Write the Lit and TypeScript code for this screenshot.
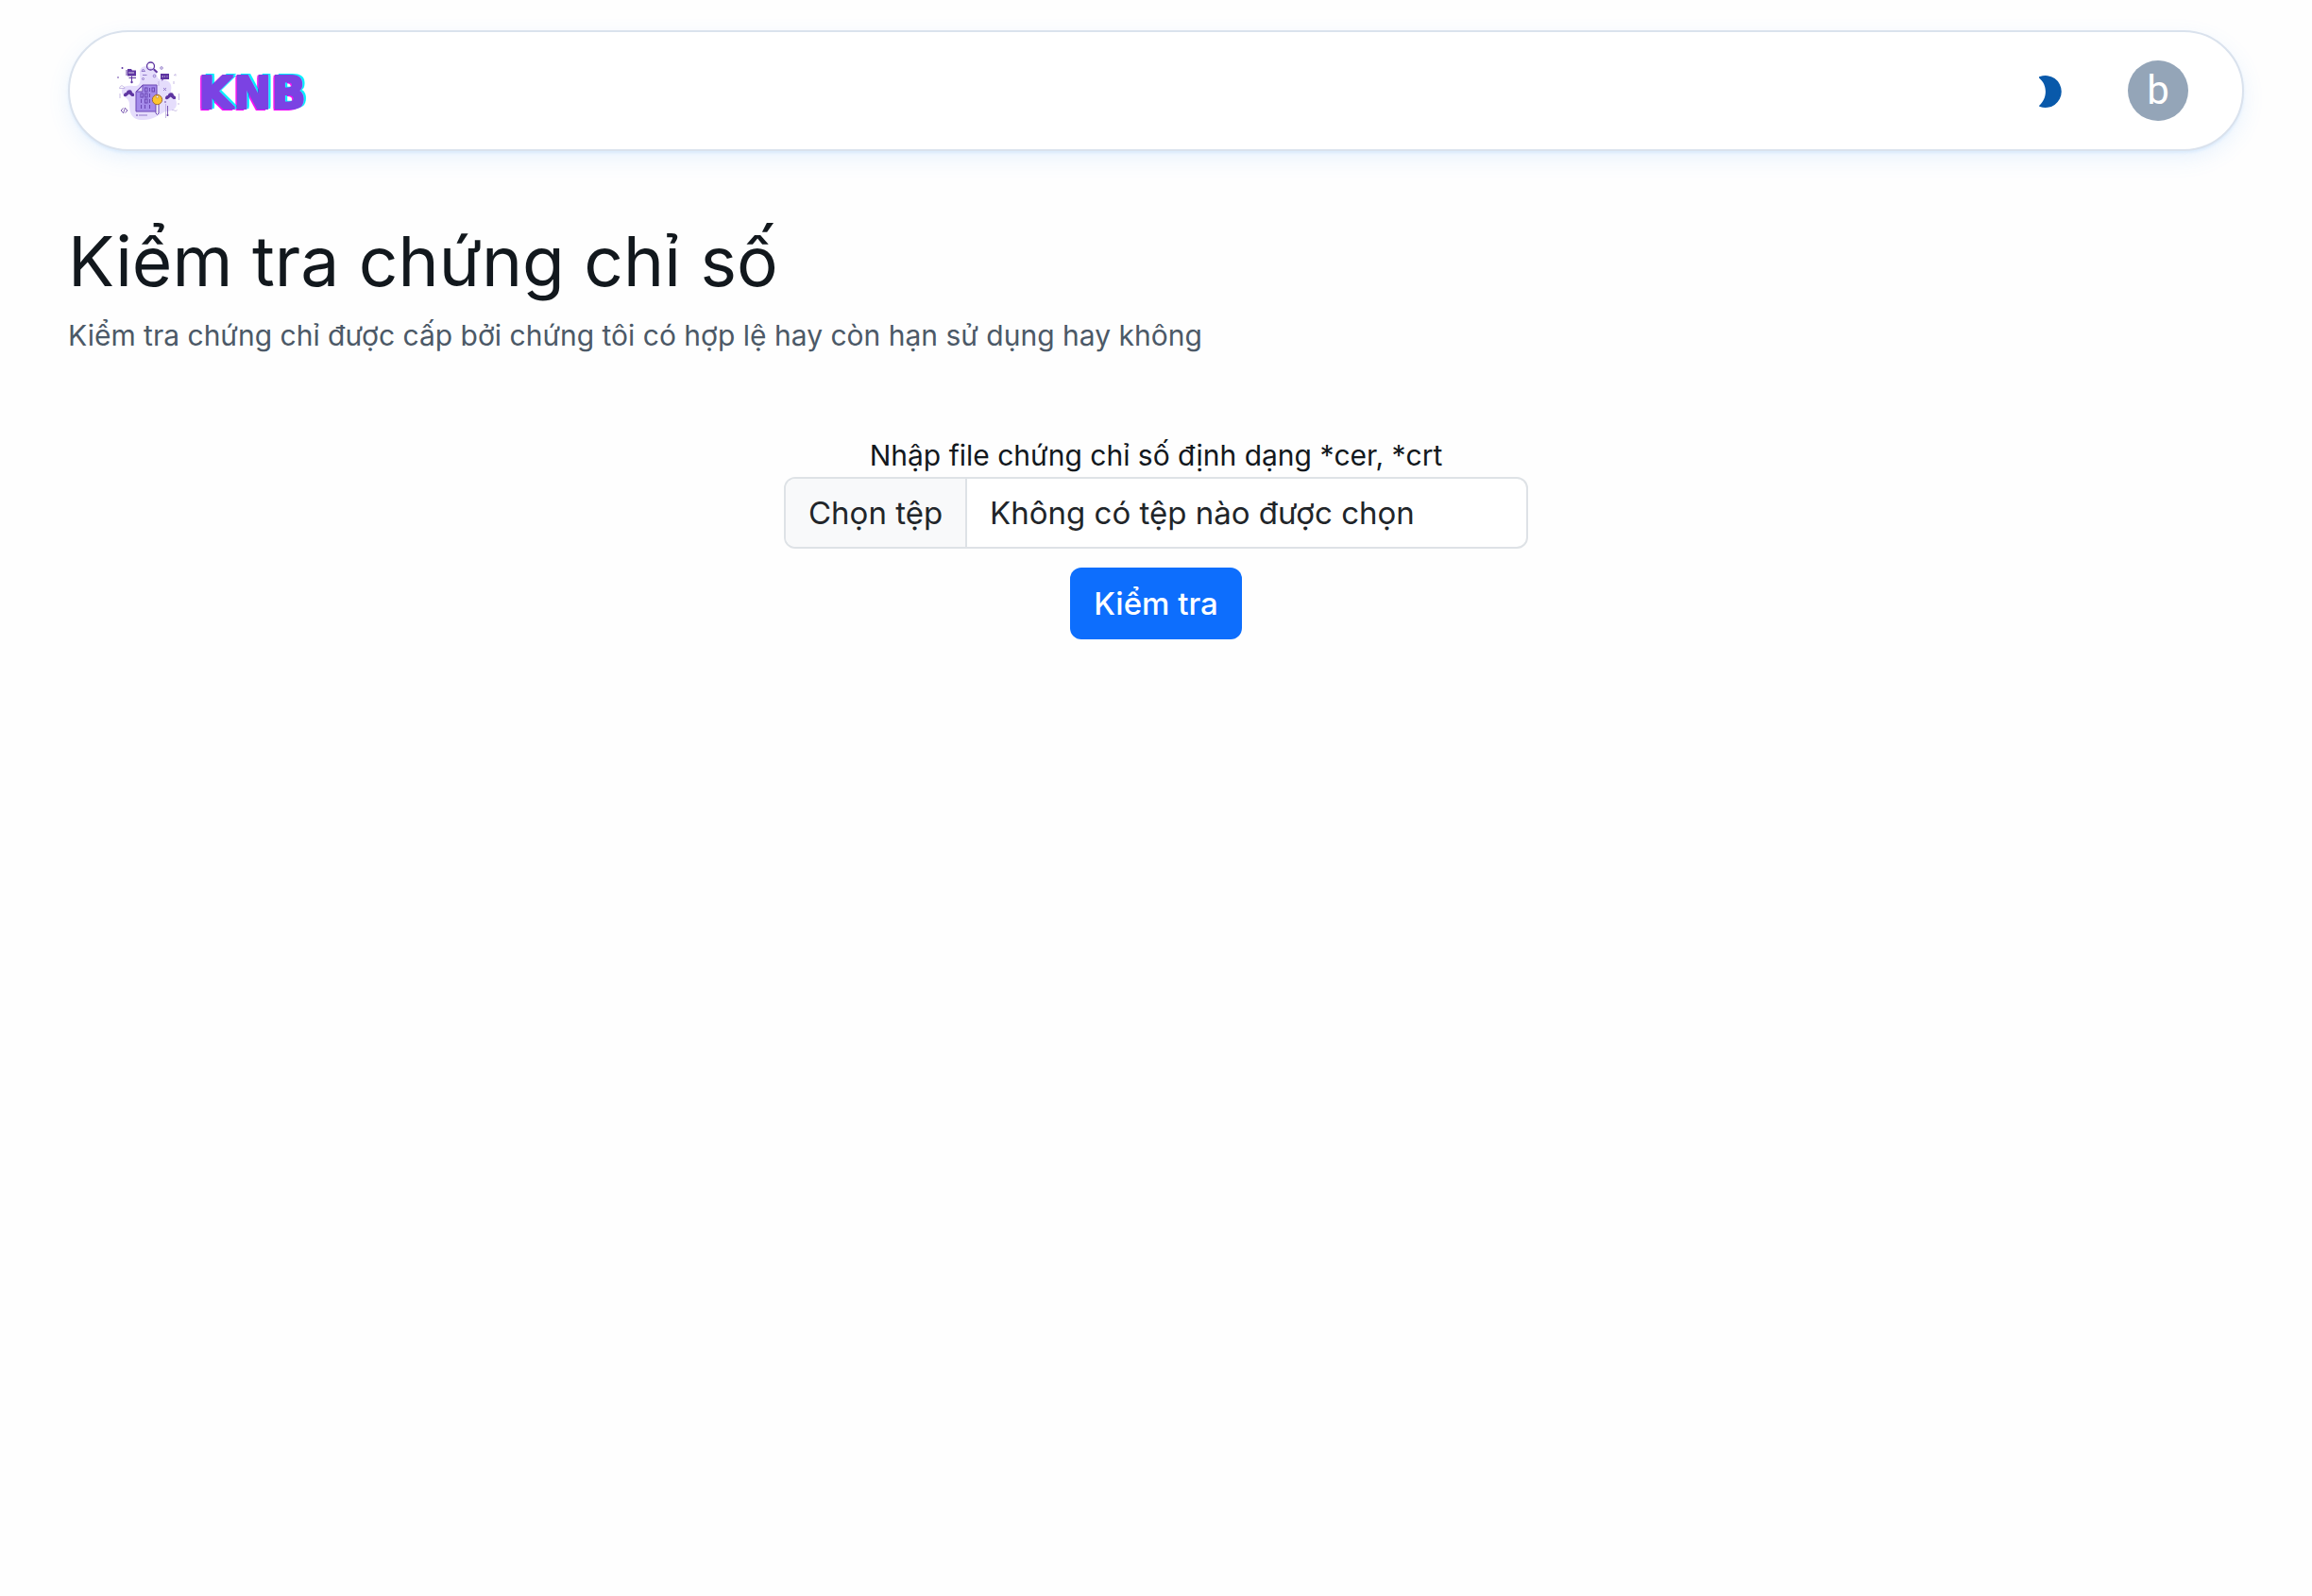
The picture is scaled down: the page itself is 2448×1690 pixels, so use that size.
import { LitElement, html, css, svg } from "lit";
import { customElement, state } from "lit/decorators.js";

@customElement("brand-mark")
class BrandMark extends LitElement {
  static styles = css`
    :host { display: block; width: 72px; height: 72px; }
    svg { display: block; width: 100%; height: 100%; }
  `;

  private cloud(x: number, y: number) {
    return svg`<path transform="translate(${x} ${y})" fill="#5e35a1"
      d="M0 6.500C-.4 4.300 1.200 3 2.800 3C3.200 .8 5 0 6.500 .3C8.200 .5 9 1.900 9 3.200C10.600 3.300 11.500 4.800 11 6.500C10 7.400 8.700 7.200 8 6.500L5.700 4.600L3.300 6.600C2.400 7.500 .8 7.500 0 6.500Z"/>`;
  }

  render() {
    return html`
      <svg viewBox="120 60 72 72" aria-hidden="true">
        <path fill="#e5ddfc" d="M148 79C147 70 153 69 159 71C168 73 164 84 170 84C178 84 183 88 181 96C180 101 187 102 187 110C187 117 179 118 175 118C168 122 160 128 149 127C138 126 137 117 137 110C137 103 128 103 129 96C130 89 139 91 144 91C149 90 149 85 148 79Z"/>
        <path fill="#a48bea" stroke="#6b46b3" d="M151 90H166V118H144V97Z"/>
        <path fill="#e5ddfc" stroke="#6b46b3" d="M144.500 97L151 90.500V97Z"/>
        <g fill="none" stroke="#6b46b3">
          <rect x="153.500" y="93" width="2.500" height="4"/><path d="M158.500 93V97"/><rect x="161" y="93" width="2.500" height="4"/>
          <rect x="149" y="99" width="2.500" height="4"/><rect x="153.500" y="99" width="2.500" height="4"/><path d="M158.500 99V103"/>
          <path d="M149.500 105V109"/><rect x="153.500" y="105" width="2.500" height="4"/><path d="M158.500 105V109"/>
          <path d="M149.500 111V115M153.500 111V115M158.500 111V115"/>
        </g>
        <path fill="#fff" stroke="#6b46b3" d="M165 110H168V120L166.500 121.500L165 120Z"/>
        <circle cx="166.500" cy="105.500" r="5.200" fill="#fdc52e" stroke="#a06a3c"/>
        <circle cx="166.500" cy="102.500" r="1.200" fill="#fff" stroke="#a06a3c" stroke-width=".6"/>
        <g fill="none" stroke="#5e35a1">
          <circle cx="159.500" cy="70" r="4" stroke-width="1.300"/><path stroke-width="2" d="M162.800 73.200L166.500 76.800"/>
          <path d="M134 74V80M136.500 82.500H144M139.500 80.500V87"/>
        </g>
        <path fill="#5e35a1" d="M135 73H139L140 74.500H144V80.500H135ZM170 78H179V84H173L171.500 86V84H170Z"/>
        <path stroke="#fff" stroke-width=".8" d="M136 77H142M171.500 81H173M174 81H175M176.500 81H177.500"/>
        ${this.cloud(131, 95)}${this.cloud(175, 98)}
        <g fill="#5e35a1"><circle cx="129.500" cy="72" r="1"/><circle cx="125" cy="82" r=".8"/><circle cx="139.500" cy="87" r="1.200"/><circle cx="145" cy="122" r=".8"/><circle cx="177.500" cy="122" r="1"/><circle cx="175" cy="108" r=".8"/></g>
        <g fill="none" stroke="#7d62bf" stroke-width=".8">
          <circle cx="171" cy="72" r="1.300"/><circle cx="163.500" cy="80.500" r="1.300"/><circle cx="151.500" cy="83.500" r="1"/><path d="M150 75.500L151.500 73L153.500 75.500ZM151 79.500H155.500M173 93L176 96M176 93L173 96M147 122H156"/>
          <path stroke="#5e35a1" d="M130.500 114.500L128 117L130.500 119.500M132.500 114L130.500 120M132.500 114.500L135 117L132.500 119.500M177.500 112V121"/>
          <path stroke="#b9aadd" d="M126.500 93.500C127 91 129 90 130.500 91.500C132 92 132 93 132 93.500ZM127 99V104M175.500 110V125M189.500 99V106M184 86V89M168 86V91M182 117C183 115 186 119 187.500 116.500M184 80L186 78.500V80.500M188 110H190"/>
        </g>
      </svg>`;
  }
}

@customElement("app-root")
class AppRoot extends LitElement {
  @state() private fileName = "";

  static styles = css`
    :host {
      display: block;
      box-sizing: border-box;
      min-height: 100vh;
      padding: 32px 72px;
      background: #fefefe;
      color: #12181d;
      font-family: Inter, "Noto Sans", sans-serif;
    }
    *, *::before { box-sizing: border-box; }
    .bar {
      display: flex;
      align-items: center;
      justify-content: space-between;
      height: 128px;
      padding: 0 57px 0 46px;
      border: 2px solid #dae2ed;
      border-radius: 64px;
      background: #fff;
      box-shadow: 0 2px 3px rgba(85, 166, 246, 0.12), 0 8px 24px -2px rgba(85, 166, 246, 0.14);
    }
    .brand { display: flex; align-items: center; gap: 18px; text-decoration: none; }
    .brand-name {
      padding-top: 4px;
      color: #7b42e3;
      font-family: "DejaVu Sans", sans-serif;
      font-size: 48px;
      font-weight: 700;
      line-height: 64px;
      text-shadow:
        1px 1px 0 #7b42e3, -1px -1px 0 #7b42e3, 1px -1px 0 #7b42e3, -1px 1px 0 #7b42e3,
        3px -2px 0 #0ef, 3px 0 0 #0ef, -2px 2px 0 #f0f, -2px 0 0 #f0f;
    }
    .actions { display: flex; align-items: center; gap: 56px; }
    .icon-button { display: flex; padding: 8px; border: 0; background: none; cursor: pointer; }
    .icon-button svg { display: block; width: 40px; height: 40px; }
    .avatar {
      width: 64px;
      height: 64px;
      padding: 0;
      border: 0;
      border-radius: 50%;
      background: #94a5b8;
      color: #fff;
      font: 42px/64px Roboto, sans-serif;
      cursor: pointer;
    }
    .intro { padding-top: 72px; }
    h1 { margin: 0; font-size: 73px; font-weight: 400; line-height: 90px; }
    .lead { margin: 0; color: #4c5967; font-size: 30px; line-height: 66px; }
    .check { display: flex; flex-direction: column; align-items: center; padding-top: 72px; }
    .caption { font-size: 30px; line-height: 45px; }
    .picker {
      position: relative;
      display: flex;
      width: 100%;
      max-width: 788px;
      height: 76px;
      margin-bottom: 20px;
      overflow: hidden;
      border: 2px solid #dee2e6;
      border-radius: 12px;
      background: #fff;
      color: #212529;
      font-size: 33px;
      line-height: 72px;
    }
    .picker-button { padding: 0 24px; border-right: 2px solid #dee2e6; background: #f8f9fa; }
    .picker-name { padding: 0 24px; }
    .picker-input { position: absolute; inset: 0; width: 100%; height: 100%; opacity: 0; cursor: pointer; }
    .submit {
      height: 76px;
      padding: 0 25px;
      border: 0;
      border-radius: 12px;
      background: #0d6efd;
      color: #fff;
      font: 500 33px/48px Inter, "Noto Sans", sans-serif;
      cursor: pointer;
    }
  `;

  private onPick(event: Event) {
    this.fileName = (event.target as HTMLInputElement).files?.[0]?.name ?? "";
  }

  render() {
    return html`
      <header class="bar">
        <a class="brand" href="#"><brand-mark></brand-mark><span class="brand-name">KNB</span></a>
        <div class="actions">
          <button class="icon-button" type="button" aria-label="Giao diện tối">
            <svg viewBox="0 0 40 40" fill="#0959aa"><path d="M11 5A17 17 0 1 1 11 37Q9.500 36.400 10.500 35.500C19 28 19 14 10.500 7Q9 5.500 11 5Z"/></svg>
          </button>
          <button class="avatar" type="button">b</button>
        </div>
      </header>
      <main>
        <section class="intro">
          <h1>Kiểm tra chứng chỉ số</h1>
          <p class="lead">Kiểm tra chứng chỉ được cấp bởi chứng tôi có hợp lệ hay còn hạn sử dụng hay không</p>
        </section>
        <form class="check" @submit=${(e: Event) => e.preventDefault()}>
          <label class="caption" for="certificate">Nhập file chứng chỉ số định dạng *cer, *crt</label>
          <div class="picker">
            <span class="picker-button">Chọn tệp</span>
            <span class="picker-name">${this.fileName || "Không có tệp nào được chọn"}</span>
            <input class="picker-input" id="certificate" type="file" accept=".cer,.crt" @change=${this.onPick} />
          </div>
          <button class="submit" type="submit">Kiểm tra</button>
        </form>
      </main>`;
  }
}
